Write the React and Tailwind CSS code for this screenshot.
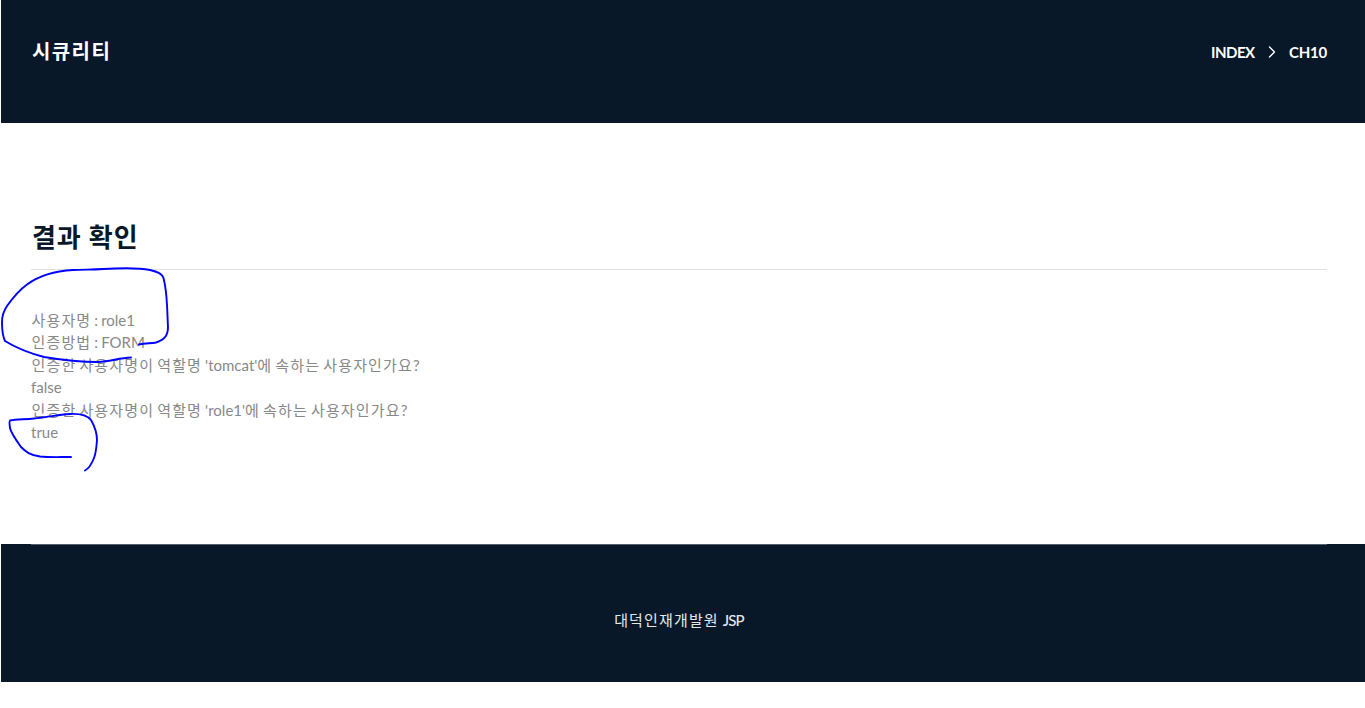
import { LuChevronRight } from "react-icons/lu";

const MENU = ["INDEX", "CH10"];

const RESULTS = [
	"사용자명 : role1",
	"인증방법 : FORM",
	"인증한 사용자명이 역할명 'tomcat'에 속하는 사용자인가요?",
	"false",
	"인증한 사용자명이 역할명 'role1'에 속하는 사용자인가요?",
	"true",
];

// Hangul runs are set a little wider than the Latin text around them
function MixedText({ children }) {
	return children.split(/([가-힣]+)/).map((part, i) =>
		/[가-힣]/.test(part) ? (
			<span key={i} className="tracking-[1.15px]">
				{part}
			</span>
		) : (
			part
		)
	);
}

function Header() {
	return (
		<header className="flex h-[123px] items-start justify-between bg-[#081828] pl-[31px] pr-[38px] text-white">
			<h1 className="pt-[36px] text-[20px] leading-[30px] font-bold tracking-[1.4px]">
				시큐리티
			</h1>
			<nav className="flex items-center pt-[41px] text-[15px] leading-[22px] font-bold">
				<span className="w-[44px] whitespace-nowrap tracking-[-0.5px]">{MENU[0]}</span>
				<LuChevronRight className="mr-[7px] ml-[7px] h-5 w-5" strokeWidth={1.6} />
				<span className="w-[38px] whitespace-nowrap tracking-[-0.2px]">{MENU[1]}</span>
			</nav>
		</header>
	);
}

// Pen strokes drawn over the result text
function PenMarks() {
	return (
		<svg
			className="pointer-events-none absolute top-0 left-0"
			width="200"
			height="480"
			viewBox="0 0 200 480"
			fill="none"
			stroke="#0000ff"
			strokeWidth="1.9"
			strokeLinecap="round"
			strokeLinejoin="round"
			aria-hidden="true"
		>
			<path d="M139 344.500C145 343 151 343.500 156 342.500C164 340 168 336 168 327C167.500 318 167.500 313 167 305C166.500 295 165.500 286 163.500 278C162.500 274 159 272 150 270C140 268 128 268 115 268.500C101 269.500 87 269.500 73 270C54 271 40 275 27 284.500C18 291 12 299 7 306C3 312 2 316 2 322C2 330 3 337 5 341C13 346 29 353 44 357C62 360 80 362 98 362C110 361.500 119 358 131 357.500" />
			<path d="M71 457C58 457 50 457.500 40 456.500C30 455 26 452 21 447C16 440 11 433 10 428C9.500 424 9 421 10 420.500C16 419 25 419.500 34 418.500C46 417.500 58 414.500 70 414C80 413.500 87 415 91 420C95 427 97 433 97 440C96.500 447 96 453 94 458C92 463 90 468 85 470.500" />
		</svg>
	);
}

export default function App() {
	return (
		<div className="relative min-h-[708px] bg-white pl-px font-[Lato,'Noto_Sans_CJK_KR',sans-serif]">
			<Header />
			<main className="h-[421px] pt-[92px] pr-[38px] pl-[30px]">
				<h2 className="h-[55px] border-b border-[#dfe0e1] text-[26px] leading-[44px] font-bold tracking-[0.9px] text-[#081828]">
					<span className="pl-px">결과 확인</span>
				</h2>
				<div className="pt-[38.5px] text-[15px] leading-[22.5px] [word-spacing:-0.8px] text-[#888888]">
					{RESULTS.map((line) => (
						<p key={line} className={/[가-힣]/.test(line) ? "pl-[0.5px]" : ""}>
							<MixedText>{line}</MixedText>
						</p>
					))}
				</div>
			</main>
			<footer className="h-[138px] bg-[#081828] pr-[38px] pl-[30px]">
				<div className="border-t border-[#56606a] pt-[64px] text-center text-[15px] leading-[23px] text-[#e5e8ea]">
					<MixedText>대덕인재개발원</MixedText>{" "}
					<span className="font-medium tracking-[-0.8px]">JSP</span>
				</div>
			</footer>
			<PenMarks />
		</div>
	);
}
